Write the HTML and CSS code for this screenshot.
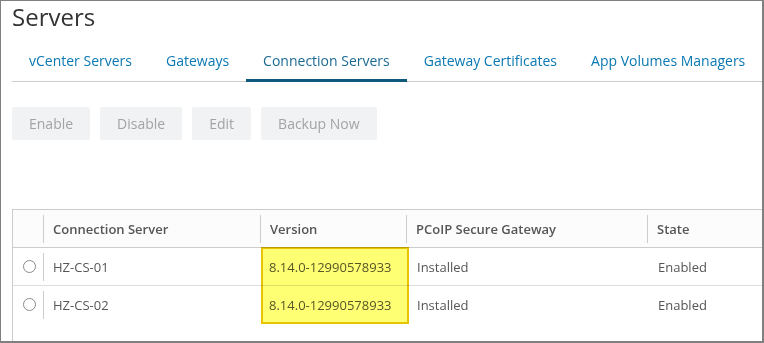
FILE: index.html
```html
<!DOCTYPE html>
<html lang="en">
<head>
  <meta charset="UTF-8">
  <title>Servers</title>
  <link rel="stylesheet" href="styles.css">
</head>
<body>
  <div class="frame">
    <h1 class="title">Servers</h1>

    <ul class="tabs">
      <li class="tab">vCenter Servers</li>
      <li class="tab">Gateways</li>
      <li class="tab active">Connection Servers</li>
      <li class="tab">Gateway Certificates</li>
      <li class="tab">App Volumes Managers</li>
    </ul>

    <div class="toolbar">
      <button class="button" disabled>Enable</button>
      <button class="button" disabled>Disable</button>
      <button class="button" disabled>Edit</button>
      <button class="button" disabled>Backup Now</button>
    </div>

    <div class="grid-wrap">
      <table class="grid">
        <thead>
          <tr>
            <th class="col-select"></th>
            <th class="col-name"><span class="sep">Connection Server</span></th>
            <th class="col-version"><span class="sep">Version</span></th>
            <th class="col-pcoip"><span class="sep">PCoIP Secure Gateway</span></th>
            <th class="col-state"><span class="sep">State</span></th>
          </tr>
        </thead>
        <tbody>
          <tr>
            <td class="col-select"><span class="radio"></span></td>
            <td><span class="sep">HZ-CS-01</span></td>
            <td>8.14.0-12990578933</td>
            <td class="wide">Installed</td>
            <td class="wide">Enabled</td>
          </tr>
          <tr class="last">
            <td class="col-select"><span class="radio"></span></td>
            <td><span class="sep">HZ-CS-02</span></td>
            <td>8.14.0-12990578933</td>
            <td class="wide">Installed</td>
            <td class="wide">Enabled</td>
          </tr>
        </tbody>
      </table>
      <div class="highlight"></div>
    </div>
  </div>
</body>
</html>
```

FILE: styles.css
```css
html, body {
  margin: 0;
  padding: 0;
}

body {
  font-family: "Open Sans", Arial, sans-serif;
  background-color: #ffffff;
}

.frame {
  box-sizing: border-box;
  width: 764px;
  height: 343px;
  overflow: hidden;
  border-top: 1px solid #808080;
  border-left: 1px solid #808080;
  border-right: 2px solid #808080;
  border-bottom: 2px solid #808080;
  padding-left: 11px;
}

.title {
  margin: 0;
  font-size: 24px;
  line-height: 32px;
  font-weight: 400;
  color: #333333;
}

.tabs {
  list-style: none;
  margin: 8px -20px 0 0;
  padding: 0;
  display: flex;
  border-bottom: 1px solid #cccccc;
}

.tab {
  padding: 10px 17px 8px 17px;
  font-size: 14px;
  line-height: 20px;
  color: #0a78b2;
  border-bottom: 3px solid transparent;
  margin-bottom: -1px;
  white-space: nowrap;
}

.tab.active {
  color: #1b6a93;
  border-bottom-color: #0f5a7c;
}

.toolbar {
  display: flex;
  gap: 10px;
  margin-top: 25px;
}

.button {
  font-family: "Open Sans", Arial, sans-serif;
  font-size: 14px;
  height: 33px;
  padding: 0 17px;
  border: none;
  border-radius: 2px;
  background-color: #f1f2f3;
  color: #a3a3a3;
}

.grid-wrap {
  position: relative;
  margin-top: 69px;
  width: 900px;
  height: 200px;
  border: 1px solid #cccccc;
}

.grid {
  border-collapse: collapse;
  font-size: 13px;
  color: #565656;
  table-layout: fixed;
  width: 100%;
}

.grid th,
.grid td {
  height: 37px;
  padding: 0;
  text-align: left;
  white-space: nowrap;
  vertical-align: middle;
}

.grid th {
  font-weight: 600;
  background-color: #fcfcfc;
  border-bottom: 1px solid #cccccc;
}

.grid td {
  border-bottom: 1px solid #dddddd;
  padding-left: 9px;
}

.grid td.wide {
  padding-left: 11px;
}

.grid .last td {
  border-bottom: none;
}

.grid th .sep {
  display: block;
  border-left: 1px solid #cccccc;
  padding-left: 9px;
  line-height: 28px;
}

.grid td .sep {
  display: block;
  margin-left: -9px;
  border-left: 1px solid #cccccc;
  padding-left: 9px;
  line-height: 28px;
}

.grid th.col-select {
  width: 30px;
}

.grid td.col-select {
  padding-left: 0;
  text-align: center;
}

.col-name {
  width: 217px;
}

.col-version {
  width: 146px;
}

.col-pcoip {
  width: 241px;
}

.radio {
  display: inline-block;
  width: 11px;
  height: 11px;
  border: 1px solid #8a8a8a;
  border-radius: 50%;
  background-color: #ffffff;
  vertical-align: middle;
  margin: -4px 0 0 2px;
}

.highlight {
  position: absolute;
  left: 248px;
  top: 37px;
  width: 144px;
  height: 73px;
  background-color: rgba(255, 255, 70, 0.75);
  border: 2px solid #e8c300;
  mix-blend-mode: multiply;
}
```
